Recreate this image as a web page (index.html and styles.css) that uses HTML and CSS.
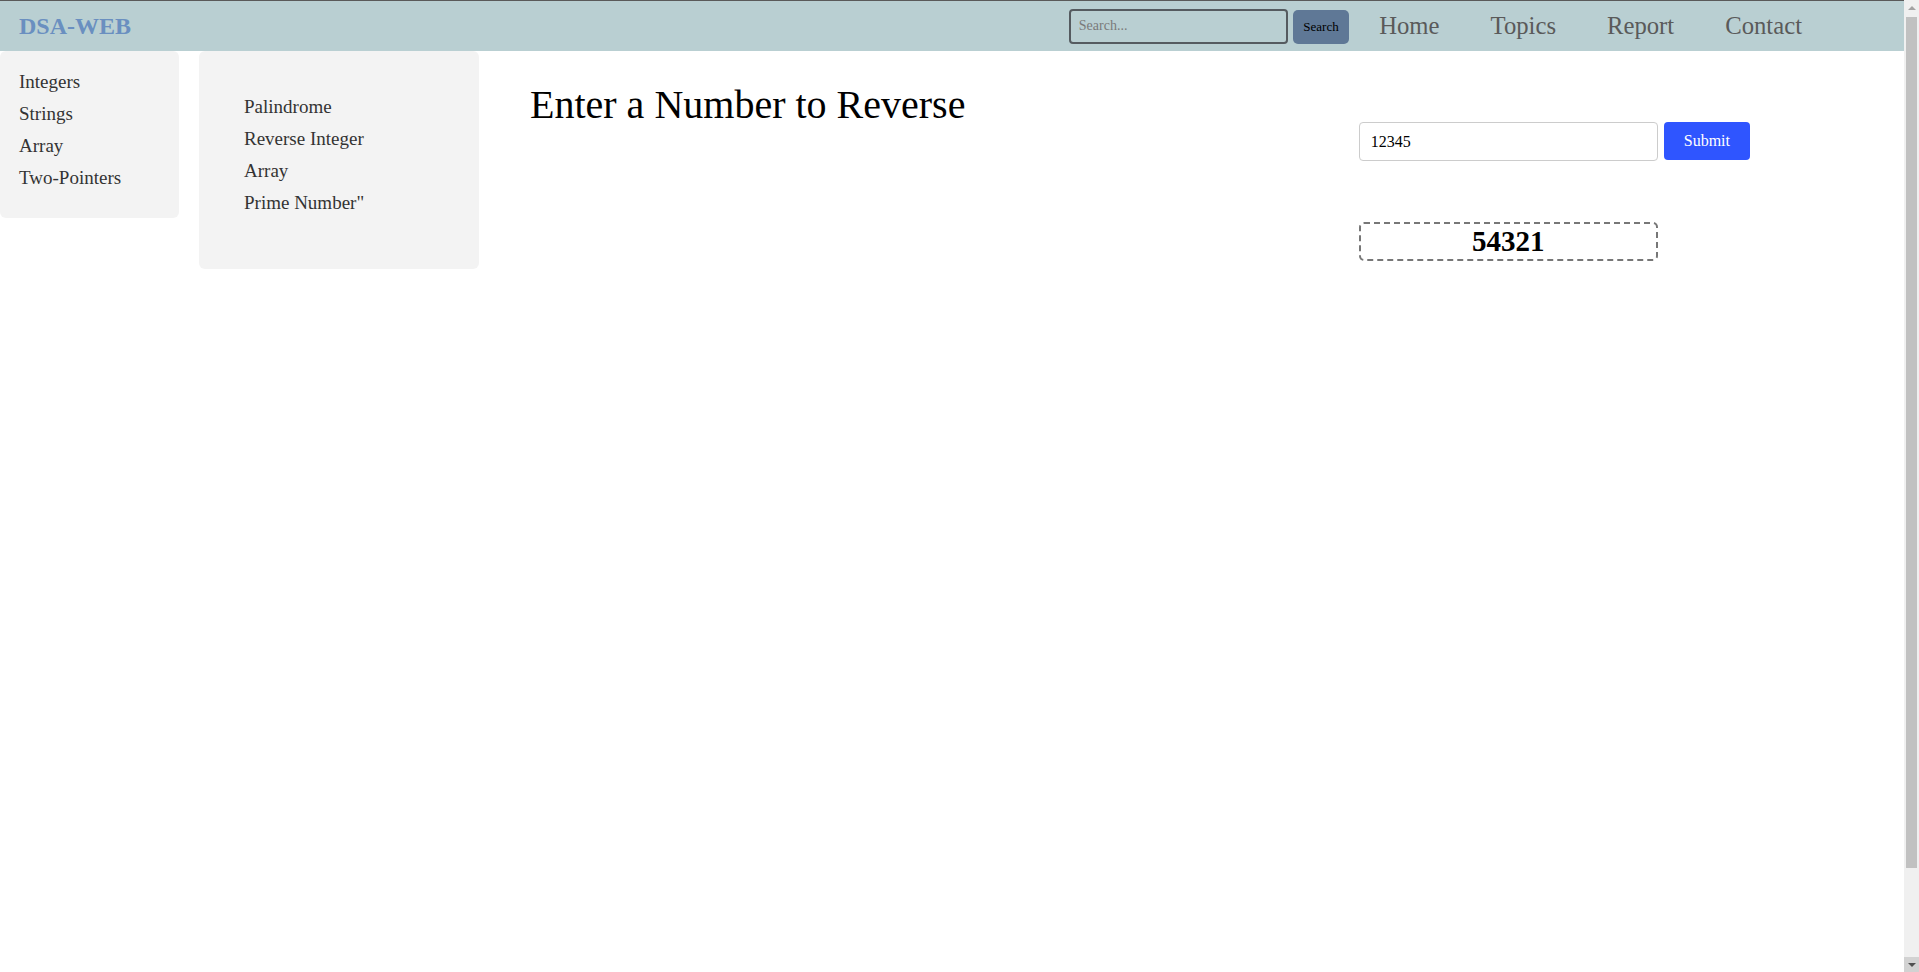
FILE: index.html
```html
<!DOCTYPE html>
<html lang="en">
<head>
<meta charset="utf-8">
<title>DSA-WEB</title>
<link rel="stylesheet" href="styles.css">
</head>
<body>
<nav class="navbar">
  <a class="logo" href="#">DSA-WEB</a>
  <div class="nav-right">
    <form class="search-form">
      <input class="search-input" type="text" placeholder="Search...">
      <button class="search-btn" type="button">Search</button>
    </form>
    <ul class="nav-links">
      <li><a href="#">Home</a></li>
      <li><a href="#">Topics</a></li>
      <li><a href="#">Report</a></li>
      <li><a href="#">Contact</a></li>
    </ul>
  </div>
</nav>
<div class="layout">
  <aside class="sidebar">
    <ul>
      <li>Integers</li>
      <li>Strings</li>
      <li>Array</li>
      <li>Two-Pointers</li>
    </ul>
  </aside>
  <aside class="panel">
    <ul>
      <li>Palindrome</li>
      <li>Reverse Integer</li>
      <li>Array</li>
      <li>Prime Number"</li>
    </ul>
  </aside>
  <main class="content">
    <h1 class="title">Enter a Number to Reverse</h1>
    <div class="form-col">
      <div class="form-row">
        <input class="num-input" type="text" value="12345">
        <button class="submit-btn" type="button">Submit</button>
      </div>
      <div class="result">54321</div>
    </div>
  </main>
</div>
<div class="scrollbar" aria-hidden="true">
  <div class="sb-btn sb-up"><span class="tri-up"></span></div>
  <div class="sb-track"><div class="sb-thumb"></div></div>
  <div class="sb-btn sb-down"><span class="tri-down"></span></div>
</div>
</body>
</html>
```
FILE: styles.css
```css
html, body {
  margin: 0;
  padding: 0;
}
html {
  scrollbar-width: none;
}
body {
  font-family: "Liberation Serif", "Times New Roman", serif;
  background: #ffffff;
  color: #000;
}
.navbar {
  display: flex;
  align-items: center;
  justify-content: space-between;
  height: 50px;
  border-top: 1px solid #5a5a5a;
  background: #b9cfd2;
  padding: 0 117px 0 19px;
}
.logo {
  font-size: 24px;
  font-weight: bold;
  color: #6a8fc0;
  text-decoration: none;
}
.nav-right {
  display: flex;
  align-items: center;
}
.search-form {
  display: flex;
  align-items: center;
  gap: 5px;
  margin: 0 30px 0 0;
}
.search-input {
  width: 219px;
  height: 35px;
  box-sizing: border-box;
  border: 2px solid #555b60;
  border-radius: 4px;
  background: transparent;
  padding: 0 8px;
  font-family: "Liberation Serif", serif;
  font-size: 14px;
  color: #333;
  outline: none;
}
.search-input::placeholder {
  color: #7a7a7a;
}
.search-btn {
  height: 34px;
  padding: 0 10.5px;
  margin-top: 1px;
  background: #5f7896;
  border: none;
  border-radius: 5px;
  font-family: "Liberation Serif", serif;
  font-size: 13px;
  color: #000;
}
.nav-links {
  display: flex;
  gap: 51px;
  list-style: none;
  margin: 0;
  padding: 0;
}
.nav-links a {
  font-size: 24.7px;
  color: #5a5a5a;
  text-decoration: none;
}
.layout {
  display: flex;
  align-items: flex-start;
  min-height: calc(100vh + 52px);
}
.sidebar {
  width: 179px;
  box-sizing: border-box;
  background: #f3f3f3;
  border-radius: 6px;
  padding: 14.5px 0 24.5px 19px;
}
.sidebar ul,
.panel ul {
  list-style: none;
  margin: 0;
  padding: 0;
}
.sidebar li,
.panel li {
  font-size: 19px;
  line-height: 32px;
  color: #333;
}
.panel {
  width: 280px;
  height: 218px;
  box-sizing: border-box;
  margin-left: 20px;
  background: #f3f3f3;
  border-radius: 6px;
  padding: 39.5px 0 0 45px;
}
.content {
  flex: 1;
  display: flex;
  align-items: flex-start;
  padding: 29.5px 169px 0 51px;
}
.title {
  margin: 0;
  font-size: 40px;
  font-weight: normal;
  line-height: normal;
}
.form-col {
  margin-left: auto;
  margin-top: 41.5px;
}
.form-row {
  display: flex;
  align-items: flex-start;
  gap: 6px;
}
.num-input {
  width: 299px;
  height: 39px;
  box-sizing: border-box;
  border: 1px solid #cccccc;
  border-radius: 4px;
  padding: 0 11px;
  font-family: "Liberation Serif", serif;
  font-size: 16px;
  color: #000;
  outline: none;
}
.submit-btn {
  height: 38px;
  padding: 0 20px;
  background: #2f55ff;
  color: #ffffff;
  border: none;
  border-radius: 4px;
  font-family: "Liberation Serif", serif;
  font-size: 16px;
}
.result {
  margin-top: 61px;
  width: 299px;
  height: 39px;
  box-sizing: border-box;
  border: 2px dashed #777777;
  border-radius: 5px;
  text-align: center;
  font-size: 29px;
  font-weight: bold;
  line-height: 35px;
}
/* simulated browser scrollbar overlay */
.scrollbar {
  position: fixed;
  top: 0;
  right: 0;
  width: 15px;
  height: 100vh;
  background: #f0f0f0;
  display: flex;
  flex-direction: column;
}
.sb-btn {
  height: 15px;
  display: flex;
  align-items: center;
  justify-content: center;
}
.sb-down {
  background: #d2d2d2;
}
.sb-track {
  flex: 1;
  padding: 2px 2px 0 2px;
}
.sb-thumb {
  height: 851px;
  background: #c1c1c1;
}
.tri-up {
  width: 0;
  height: 0;
  border-left: 4px solid transparent;
  border-right: 4px solid transparent;
  border-bottom: 4px solid #a3a3a3;
}
.tri-down {
  width: 0;
  height: 0;
  border-left: 4px solid transparent;
  border-right: 4px solid transparent;
  border-top: 4px solid #505050;
}
```
